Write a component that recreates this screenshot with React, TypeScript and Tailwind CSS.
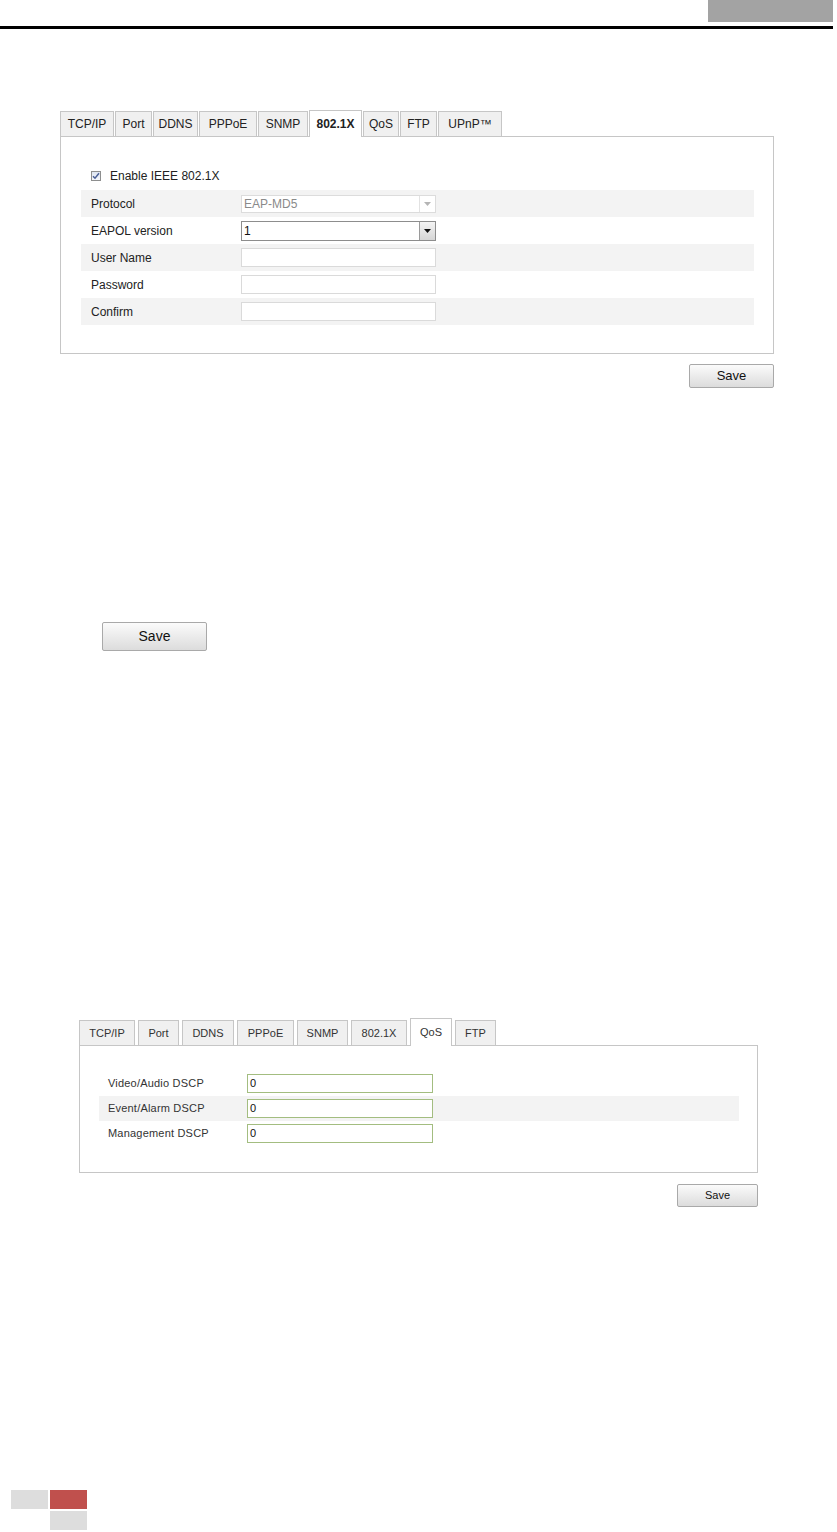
import { ReactNode } from 'react';

type Tab = { label: string; w: string; active?: boolean };

const topTabs: Tab[] = [
  { label: 'TCP/IP', w: 'w-[54px]' },
  { label: 'Port', w: 'w-[37px]' },
  { label: 'DDNS', w: 'w-[45px]' },
  { label: 'PPPoE', w: 'w-[58px]' },
  { label: 'SNMP', w: 'w-[50px]' },
  { label: '802.1X', w: 'w-[53px]', active: true },
  { label: 'QoS', w: 'w-[36px]' },
  { label: 'FTP', w: 'w-[37px]' },
  { label: 'UPnP™', w: 'w-[64px]' },
];

const bottomTabs: Tab[] = [
  { label: 'TCP/IP', w: 'w-[56px]' },
  { label: 'Port', w: 'w-[41px]' },
  { label: 'DDNS', w: 'w-[52px]' },
  { label: 'PPPoE', w: 'w-[57px]' },
  { label: 'SNMP', w: 'w-[51px]' },
  { label: '802.1X', w: 'w-[56px]' },
  { label: 'QoS', w: 'w-[42px]', active: true },
  { label: 'FTP', w: 'w-[41px]' },
];

function SaveButton({ className }: { className: string }) {
  return (
    <button
      className={`flex items-center justify-center border border-[#a9a9a9] rounded-[2px] bg-gradient-to-b from-[#fbfbfb] to-[#dcdcdc] text-[#111] ${className}`}
    >
      Save
    </button>
  );
}

function Arrow({ disabled }: { disabled?: boolean }) {
  return (
    <div
      className={`w-[16px] h-full flex items-center justify-center border-l ${
        disabled ? 'border-[#e2e2e2] bg-white' : 'border-[#9a9a9a] bg-gradient-to-b from-[#f4f4f4] to-[#d6d6d6]'
      }`}
    >
      <svg width="7" height="4" viewBox="0 0 7 4">
        <path d="M0 0h7L3.5 4z" fill={disabled ? '#b5b5b5' : '#111'} />
      </svg>
    </div>
  );
}

function Row({ label, grey, children }: { label: string; grey?: boolean; children: ReactNode }) {
  return (
    <div className={`h-[27px] flex items-center pl-[10px] ${grey ? 'bg-[#f3f3f3]' : ''}`}>
      <span className="w-[150px] text-[12px] text-[#222]">{label}</span>
      {children}
    </div>
  );
}

function QosRow({ label, grey }: { label: string; grey?: boolean }) {
  return (
    <div className={`h-[25px] flex items-center pl-[9px] ${grey ? 'bg-[#f3f3f3]' : ''}`}>
      <span className="w-[139px] text-[11px] text-[#333] tracking-[0.2px]">{label}</span>
      <div className="w-[186px] h-[19px] border border-[#a3bd80] bg-white flex items-center pl-[2px] text-[11px] text-[#111]">
        0
      </div>
    </div>
  );
}

function TabBar({ tabs, gap, bold, small }: { tabs: Tab[]; gap: string; bold?: boolean; small?: boolean }) {
  return (
    <div className={`flex items-end ${gap}`}>
      {tabs.map((t) => (
        <div
          key={t.label}
          className={`${t.w} flex items-center justify-center border border-b-0 border-[#c6c6c6] ${
            small ? 'text-[11px] text-[#333]' : 'text-[12px] text-[#222]'
          } ${
            t.active
              ? `relative z-10 -mb-px bg-white ${small ? 'h-[28px]' : 'h-[27px]'} ${bold ? 'font-bold' : ''}`
              : `bg-[#f0f0f0] ${small ? 'h-[25px]' : 'h-[25px]'}`
          }`}
        >
          {t.label}
        </div>
      ))}
    </div>
  );
}

export default function App() {
  return (
    <div className="w-[837px] h-[1532px] bg-white flex flex-col font-['Liberation_Sans',Arial,sans-serif]">
      {/* header */}
      <div className="flex justify-end pr-[4px]">
        <div className="w-[125px] h-[22px] bg-[#a3a3a3]" />
      </div>
      <div className="mt-[4px] w-[833px] h-[3px] bg-black" />

      {/* 802.1X */}
      <div className="mt-[81px] ml-[60px] w-[714px] flex flex-col">
        <TabBar tabs={topTabs} gap="gap-[1px]" bold />
        <div className="border border-[#c6c6c6] pt-[28px] pb-[28px] pl-[20px] pr-[19px]">
          <div className="h-[22px] flex items-center pl-[10px] gap-[9px]">
            <div className="w-[10px] h-[10px] border border-[#8e8f8f] bg-gradient-to-b from-[#dfe6f2] to-[#f5f7fb] flex items-center justify-center">
              <svg width="8" height="8" viewBox="0 0 8 8">
                <path d="M1 4.2l2 2L7 1.2" fill="none" stroke="#4a5f97" strokeWidth="1.5" />
              </svg>
            </div>
            <span className="text-[12px] text-[#222]">Enable IEEE 802.1X</span>
          </div>
          <div className="mt-[3px] flex flex-col">
            <Row label="Protocol" grey>
              <div className="w-[195px] h-[18px] border border-[#dcdcdc] bg-white flex items-center">
                <span className="flex-1 pl-[2px] text-[12px] text-[#8a8a8a]">EAP-MD5</span>
                <Arrow disabled />
              </div>
            </Row>
            <Row label="EAPOL version">
              <div className="w-[195px] h-[20px] border border-[#8d8d8d] bg-white flex items-center">
                <span className="flex-1 pl-[2px] text-[12px] text-[#111]">1</span>
                <Arrow />
              </div>
            </Row>
            <Row label="User Name" grey>
              <div className="w-[195px] h-[19px] border border-[#dadada] bg-white" />
            </Row>
            <Row label="Password">
              <div className="w-[195px] h-[19px] border border-[#dadada] bg-white" />
            </Row>
            <Row label="Confirm" grey>
              <div className="w-[195px] h-[19px] border border-[#dadada] bg-white" />
            </Row>
          </div>
        </div>
        <div className="flex justify-end mt-[10px]">
          <SaveButton className="w-[85px] h-[24px] text-[13px]" />
        </div>
      </div>

      {/* standalone save */}
      <div className="mt-[234px] ml-[102px]">
        <SaveButton className="w-[105px] h-[29px] text-[14px]" />
      </div>

      {/* QoS */}
      <div className="mt-[367px] ml-[79px] w-[679px] flex flex-col">
        <TabBar tabs={bottomTabs} gap="gap-[3px]" small />
        <div className="border border-[#c6c6c6] pt-[25px] pb-[26px] pl-[19px] pr-[18px]">
          <QosRow label="Video/Audio DSCP" />
          <QosRow label="Event/Alarm DSCP" grey />
          <QosRow label="Management DSCP" />
        </div>
        <div className="flex justify-end mt-[11px]">
          <SaveButton className="w-[81px] h-[23px] text-[11px]" />
        </div>
      </div>

      {/* footer */}
      <div className="mt-[283px] ml-[11px] grid grid-cols-[37px_37px] gap-x-[2px] gap-y-[2px]">
        <div className="h-[19px] bg-[#dddddd]" />
        <div className="h-[19px] bg-[#c0504d]" />
        <div />
        <div className="h-[19px] bg-[#dddddd]" />
      </div>
    </div>
  );
}
